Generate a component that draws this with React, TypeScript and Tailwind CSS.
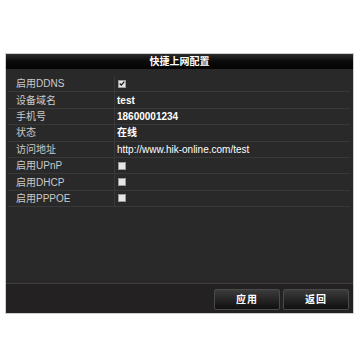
import React from 'react';

type Row = { label: string; value?: string; check?: boolean; bold?: boolean };

const rows: Row[] = [
  { label: '启用DDNS', check: true },
  { label: '设备域名', value: 'test', bold: true },
  { label: '手机号', value: '18600001234', bold: true },
  { label: '状态', value: '在线', bold: true },
  { label: '访问地址', value: 'http://www.hik-online.com/test' },
  { label: '启用UPnP', check: false },
  { label: '启用DHCP', check: false },
  { label: '启用PPPOE', check: false },
];

const Checkbox: React.FC<{ checked: boolean }> = ({ checked }) => (
  <div className="w-[8px] h-[8px] bg-[#e6e6e6] border border-[#9a9a9a] flex items-center justify-center">
    {checked && (
      <svg width="7" height="7" viewBox="0 0 8 8">
        <path d="M1 4 L3.2 6.2 L7 1.5" stroke="#111" strokeWidth="1.6" fill="none" />
      </svg>
    )}
  </div>
);

const Btn: React.FC<{ label: string }> = ({ label }) => (
  <button className="w-[66px] h-[21px] rounded-[2px] border border-[#4a4a4a] bg-gradient-to-b from-[#3c3c3c] to-[#101010] text-white text-[10px] font-bold tracking-[1px]">
    {label}
  </button>
);

export default function App() {
  return (
    <div
      className="w-[360px] h-[340px] bg-white pt-[53px] pl-[5px]"
      style={{ fontFamily: '"Liberation Sans", "Noto Sans CJK SC", sans-serif' }}
    >
      <div className="w-[349px] h-[261px] border border-[#cfcfcf] bg-[#2a2929] flex flex-col">
        <div className="h-[15px] bg-gradient-to-b from-[#2c2c2c] via-[#0a0a0a] to-[#050505] flex items-center justify-center text-white text-[10px] font-bold">
          快捷上网配置
        </div>
        <div className="flex-1 flex flex-col border-b border-[#3f3e3e] px-[2px] pt-[7px]">
          {rows.map((r) => (
            <div
              key={r.label}
              className="h-[16.4px] grid grid-cols-[107px_1fr] border-b border-[#3a3939] mr-[1px]"
            >
              <div className="flex items-center pl-[8px] text-[#c9c9c9] text-[10px] border-r border-[#3a3939]">
                {r.label}
              </div>
              <div className={`flex items-center pl-[2px] text-white text-[10px] ${r.bold ? 'font-bold' : ''}`}>
                {r.check !== undefined ? <div className="pl-[1px]"><Checkbox checked={r.check} /></div> : r.value}
              </div>
            </div>
          ))}
        </div>
        <div className="h-[29px] bg-[#232121] flex items-center justify-end gap-[3px] pr-[4px] pt-[2px]">
          <Btn label="应用" />
          <Btn label="返回" />
        </div>
      </div>
    </div>
  );
}
